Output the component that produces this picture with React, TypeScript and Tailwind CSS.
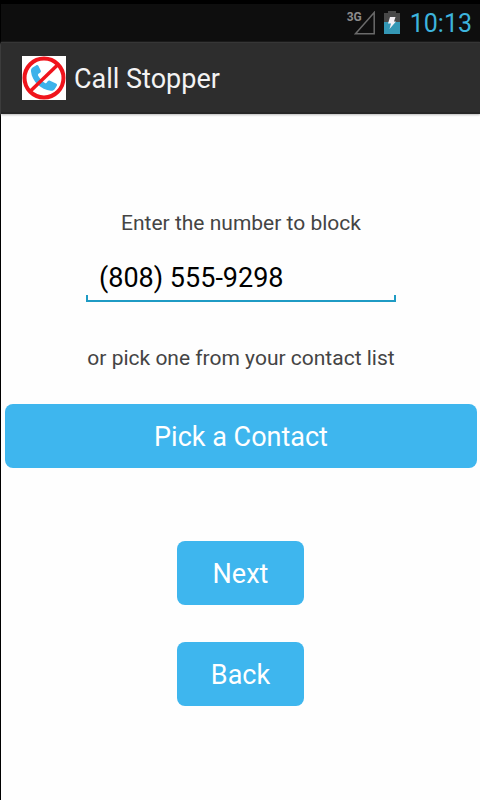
import React, { useState } from 'react';

interface ActionButtonProps {
  label: string;
  wide?: boolean;
}

const ActionButton: React.FC<ActionButtonProps> = ({ label, wide = false }) => (
  <button
    type="button"
    className={`h-16 rounded-lg bg-[#3eb6ee] pt-0.5 text-[27px] leading-8 text-white active:bg-[#2a9fd6] ${wide ? 'w-full' : 'w-[127px]'}`}
  >
    {label}
  </button>
);

const StatusBar: React.FC = () => (
  <div className="flex h-[38px] items-center justify-end bg-[#0e0e0e] pr-2">
    {/* Signal */}
    <div className="flex items-start">
      <span className="text-xs leading-3 font-bold text-[#8c8c8c]">3G</span>
      <svg className="-ml-2 h-6 w-[22px]" viewBox="0 0 22 24" fill="none" stroke="#6a6a6a" strokeWidth="1.5">
        <path d="M20.2 1.5V22.8H1.5z" />
      </svg>
    </div>

    {/* Battery */}
    <svg className="ml-2 h-6 w-4" viewBox="0 0 16 24">
      <path d="M4 0h8v2h4v9H0V2h4z" fill="#484848" />
      <path d="M0 11h16v12H0z" fill="#3497b5" />
      <path d="M6 6h5.500l-1.500 4.500h2L5.500 18l1.500-5.500H4z" fill="#f4f0f5" />
    </svg>

    <span className="ml-2.5 pt-0.5 text-[25px] leading-8 text-[#3db4dd]">10:13</span>
  </div>
);

const AppIcon: React.FC = () => (
  <svg className="h-11 w-11" viewBox="0 0 44 44">
    <rect width="44" height="44" fill="#fff" />
    <path
      d="M9 15.500c-.2-2 .4-3.300 2-4.300l3-1.800c1-.6 1.900-.4 2.500.6l2.200 4.500c.4 1 .2 1.700-.7 2.300l-1.500 1c-.7.500-.7 1.200-.3 2 1.500 2.800 3.800 5.400 6.700 7.200.8.400 1.400.3 1.900-.4l.9-1.300c.6-.8 1.400-1 2.300-.5l6 2.700c1 .5 1.300 1.300.8 2.300l-2 3.200c-.9 1.400-2.200 1.900-4 1.700C19 33.700 10 25.500 9 15.500z"
      fill="#3eb2ea"
    />
    <circle cx="22" cy="22" r="19.500" fill="none" stroke="#f0141c" strokeWidth="4" />
    <path d="M36 8.500L8 35.500" stroke="#f0141c" strokeWidth="3.500" />
  </svg>
);

const App: React.FC = () => {
  const [number, setNumber] = useState('(808) 555-9298');

  return (
    <div className="flex min-h-screen flex-col border-t-4 border-l border-black bg-[#fefefe] font-[Roboto,sans-serif]">
      <StatusBar />

      <header className="flex h-[72px] items-center gap-2 border-t border-b-2 border-t-[#363636] border-b-[#262626] bg-[#2d2d2d] pl-[21px] shadow-[0_1px_2px_#bbb]">
        <AppIcon />
        <h1 className="pt-0.5 text-[27px] leading-8 text-[#f3f3f3]">Call Stopper</h1>
      </header>

      <main className="flex flex-col items-center pt-[97px] pr-[3px] pb-12 pl-1">
        <label htmlFor="number" className="text-[21px] leading-6 text-[#444]">
          Enter the number to block
        </label>

        <div className="mt-6 w-[310px] max-w-full">
          <input
            id="number"
            type="tel"
            value={number}
            onChange={(e) => setNumber(e.target.value)}
            className="block h-10 w-full bg-transparent px-[13px] pb-0.5 text-[27px] leading-8 text-black outline-none"
          />
          <div className="-mt-1 h-[7px] border-x-2 border-b-2 border-[#1f9bc4]" />
        </div>

        <p className="mt-11 text-[21px] leading-6 text-[#444]">or pick one from your contact list</p>

        <div className="mt-[34px] w-full">
          <ActionButton label="Pick a Contact" wide />
        </div>

        <div className="mt-[73px] flex flex-col gap-[37px] pr-px">
          <ActionButton label="Next" />
          <ActionButton label="Back" />
        </div>
      </main>
    </div>
  );
};

export default App;
